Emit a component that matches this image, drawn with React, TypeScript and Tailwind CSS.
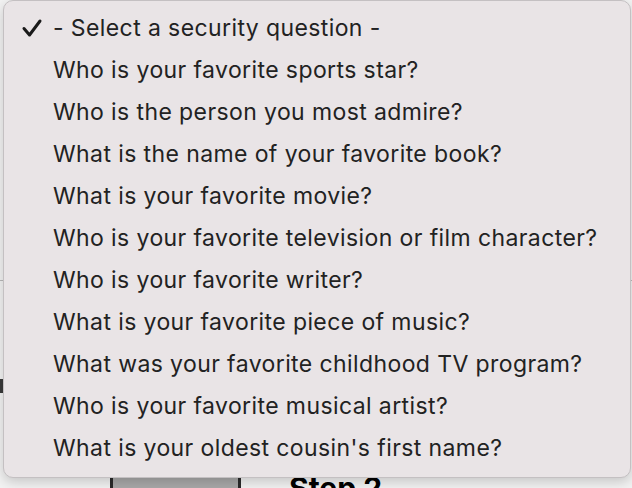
import React from 'react';

const questions = [
  'Who is your favorite sports star?',
  'Who is the person you most admire?',
  'What is the name of your favorite book?',
  'What is your favorite movie?',
  'Who is your favorite television or film character?',
  'Who is your favorite writer?',
  'What is your favorite piece of music?',
  'What was your favorite childhood TV program?',
  'Who is your favorite musical artist?',
  "What is your oldest cousin's first name?",
];

const Check: React.FC = () => (
  <svg width="22" height="20" viewBox="0 0 22 20" className="shrink-0">
    <path d="M3 10.5 L8.5 17 L19 3" fill="none" stroke="#1a1a1a" strokeWidth="3" strokeLinecap="round" strokeLinejoin="round" />
  </svg>
);

const App: React.FC = () => {
  return (
    <div className="relative w-[632px] h-[488px] overflow-hidden bg-[#f2f2f2]" style={{ fontFamily: 'Inter, "Noto Sans", sans-serif' }}>
      {/* page behind the menu */}
      <div className="pt-[280px]">
        <div className="h-px w-full bg-[#b9b9b9]" />
        <div className="mt-[98px] h-[14px] w-[3px] bg-[#3a3a3a]" />
        <div className="mt-[70px] flex items-start">
          <div className="ml-[110px] w-[131px] h-[40px] border-x-[3px] border-[#2a2a2a] bg-[#a8a8a8]" />
          <div className="ml-[48px] mt-[10px] text-[30px] font-bold text-black leading-none">Step 2</div>
        </div>
      </div>

      {/* dropdown menu */}
      <div className="absolute left-[3px] top-0 w-[628px] h-[478px] rounded-[10px] bg-[#e9e4e6] border border-[#c4c0c2] shadow-[0_4px_12px_rgba(0,0,0,0.18)] pt-[6px] text-[#222222] text-[23px] tracking-[0.4px]">
        <div className="h-[42px] flex items-center pl-[17px]">
          <Check />
          <span className="ml-[10px]">- Select a security question -</span>
        </div>
        {questions.map(q => (
          <div key={q} className="h-[42px] flex items-center pl-[49px]">
            {q}
          </div>
        ))}
      </div>
    </div>
  );
};

export default App;
